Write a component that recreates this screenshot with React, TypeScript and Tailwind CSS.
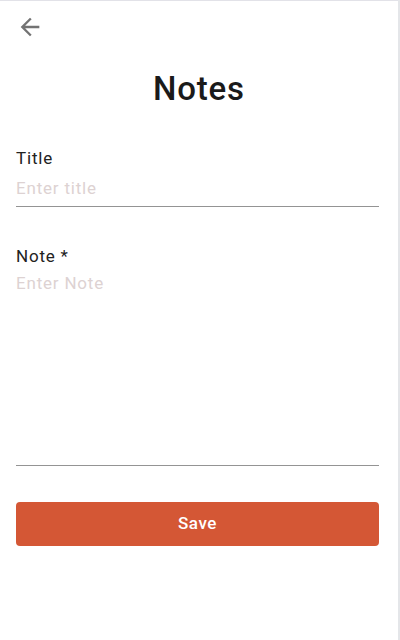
import React from "react";

export default function App() {
  return (
    <div
      className="flex h-[640px] w-[400px] overflow-hidden bg-white"
      style={{ fontFamily: "Roboto, 'Noto Sans', sans-serif" }}
    >
      <div className="flex h-full w-[398px] flex-col border-t-[1.5px] border-[#e2e2e8]">
        <div className="pl-[16px] pt-[12px]">
          <svg width="28" height="28" viewBox="0 0 24 24" fill="#737373">
            <path d="M20 11H7.83l5.59-5.59L12 4l-8 8 8 8 1.41-1.41L7.83 13H20v-2z" />
          </svg>
        </div>
        <h1 className="mt-[28px] text-center text-[33px] font-medium leading-[40px] tracking-[0.8px] text-[#1a1a1a]">
          Notes
        </h1>
        <div className="ml-4 mt-[37px] flex w-[363px] flex-col">
          <label className="text-[17px] leading-6 tracking-[0.8px] text-[#222222]">Title</label>
          <div className="mt-[6px] border-b border-[#949494] pb-[6px] text-[17px] leading-6 tracking-[0.8px] text-[#ddd2d2]">
            Enter title
          </div>
          <label className="mt-[37px] text-[17px] leading-6 tracking-[0.8px] text-[#222222]">Note *</label>
          <div className="mt-[3px] h-[195px] border-b border-[#949494] text-[17px] leading-6 tracking-[0.8px] text-[#ddd2d2]">
            Enter Note
          </div>
          <button className="mt-[36px] h-[44px] w-full rounded-[4px] bg-[#d45735] text-[17px] font-medium tracking-[0.6px] text-white">
            Save
          </button>
        </div>
      </div>
      <div className="h-full w-[2px] bg-[#e4e6e9]" />
    </div>
  );
}
